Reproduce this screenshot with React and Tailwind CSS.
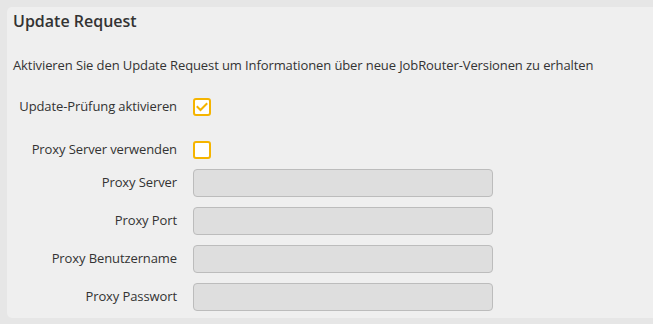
const fields = ['Proxy Server', 'Proxy Port', 'Proxy Benutzername', 'Proxy Passwort'];

const Checkbox = ({ checked }) => (
  <div className="w-[18px] h-[18px] border-2 border-[#f5b400] rounded-[3px] bg-white flex items-center justify-center">
    {checked && (
      <svg width="12" height="10" viewBox="0 0 12 10" fill="none">
        <path d="M1.5 5 L4.5 8 L10.5 2" stroke="#f5b400" strokeWidth="2" strokeLinecap="square" />
      </svg>
    )}
  </div>
);

const App = () => {
  return (
    <div className="w-[653px] h-[324px] bg-[#e6e6e6] pt-[7px] pl-[7px] overflow-hidden" style={{ fontFamily: '"Open Sans", sans-serif' }}>
      <div className="h-[311px] bg-[#efefef] rounded-l-[5px] pl-[6px] pt-[3px] text-[#333] tracking-[-0.1px]">
        <h2 className="text-[16px] leading-[22px] font-semibold tracking-normal">Update Request</h2>
        <p className="mt-[24px] text-[13px] leading-[18px]">
          Aktivieren Sie den Update Request um Informationen über neue JobRouter-Versionen zu erhalten
        </p>

        <div className="mt-[24px] flex items-center h-[18px]">
          <span className="w-[164px] text-right text-[13px]">Update-Prüfung aktivieren</span>
          <div className="ml-[16px]"><Checkbox checked /></div>
        </div>

        <div className="mt-[25px] flex items-center h-[18px]">
          <span className="w-[164px] text-right text-[13px]">Proxy Server verwenden</span>
          <div className="ml-[16px]"><Checkbox /></div>
        </div>

        <div className="mt-[10px] flex flex-col gap-[10px]">
          {fields.map((f) => (
            <div key={f} className="flex items-center">
              <span className="w-[164px] text-right text-[13px]">{f}</span>
              <div className="ml-[16px] w-[300px] h-[28px] bg-[#dedede] border border-[#bcbcbc] rounded-[4px]" />
            </div>
          ))}
        </div>
      </div>
    </div>
  );
};

export default App;
